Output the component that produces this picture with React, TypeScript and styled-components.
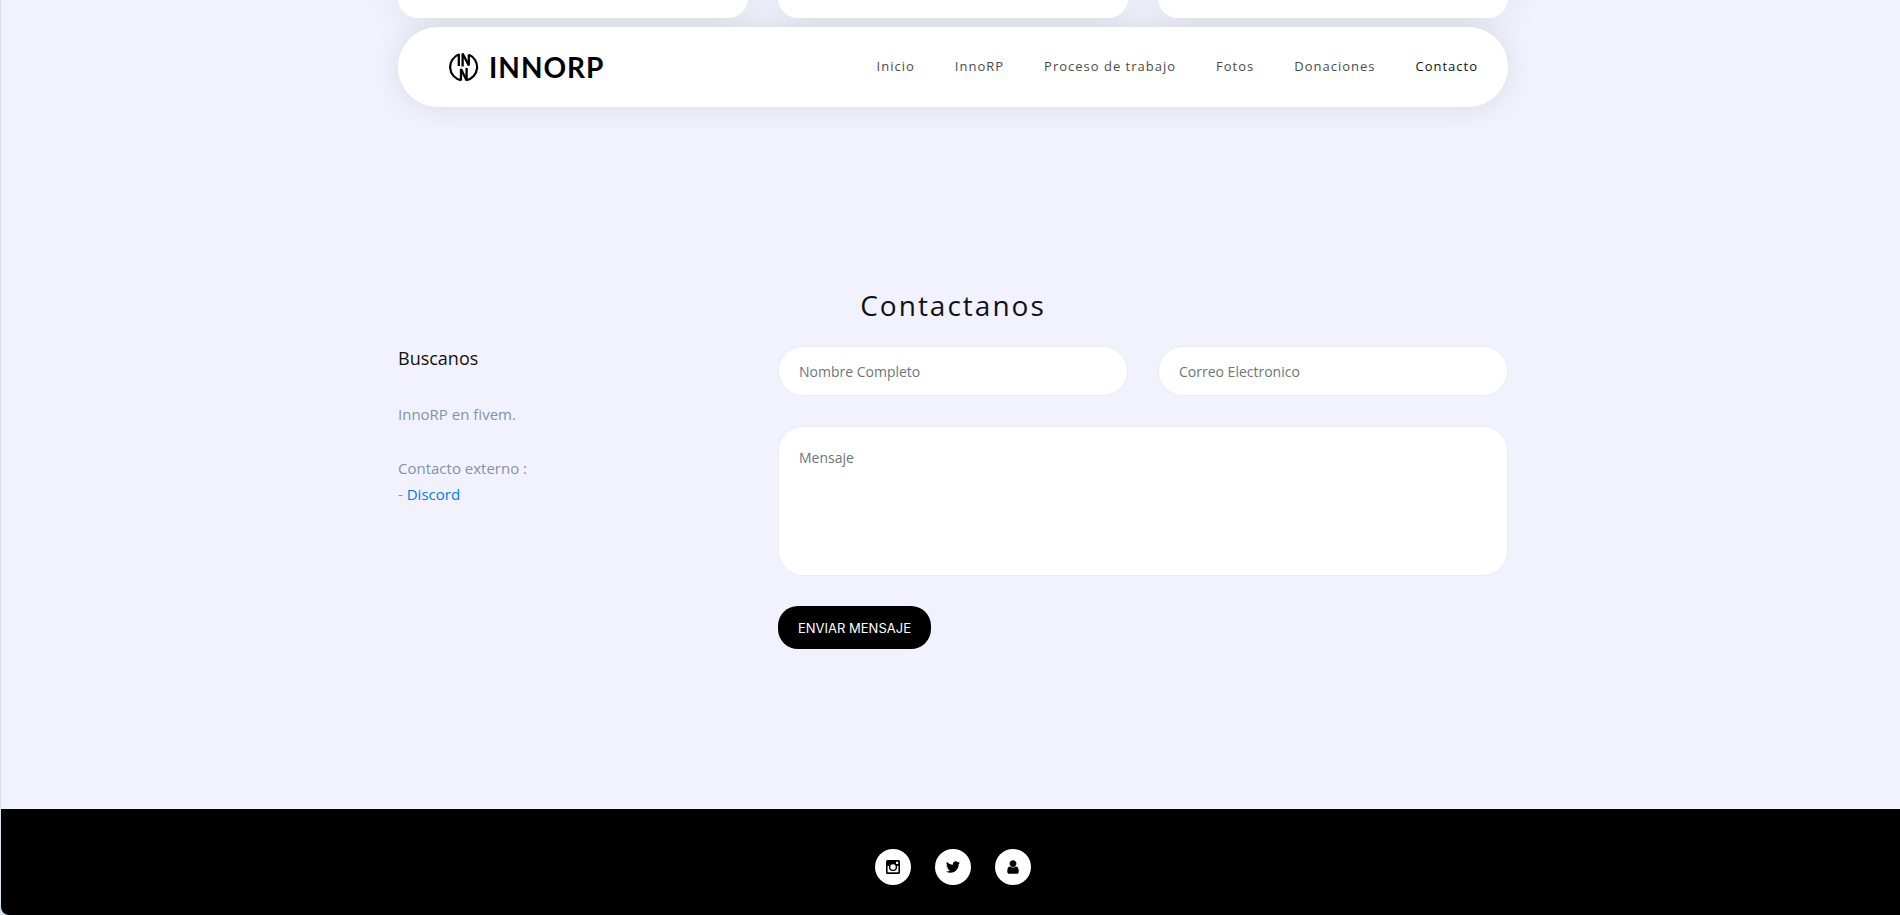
import React from "react";
import styled, { createGlobalStyle } from "styled-components";

const GlobalStyle = createGlobalStyle`
  * { box-sizing: border-box; }
  body {
    margin: 0;
    background: #d5e2ed;
    color: #111;
    font-family: "Open Sans", "Noto Sans", sans-serif;
    font-size: 15px;
    line-height: 26px;
  }
`;

const Frame = styled.div`
  padding-left: 1px;
`;

const Page = styled.div`
  display: flex;
  flex-direction: column;
  min-height: 100vh;
  overflow: hidden;
  border-bottom-left-radius: 8px;
  background: #f2f2fe;
`;

const Container = styled.div`
  width: 100%;
  max-width: 1145px;
  margin: 0 auto;
  padding: 0 15px 0 20px;
`;

const TopContainer = styled(Container)`
  isolation: isolate;
`;

const CardRow = styled.div`
  display: grid;
  grid-template-columns: repeat(3, 1fr);
  gap: 30px;
  margin-top: -100px;
`;

const Card = styled.article`
  height: 118px;
  border-radius: 20px;
  background: #fff;
  box-shadow: 0 0 40px rgba(20, 20, 50, 0.08);
`;

const NavBar = styled.header`
  position: relative;
  display: flex;
  align-items: center;
  justify-content: space-between;
  min-height: 80px;
  margin-top: 9px;
  padding: 0 10px 0 51px;
  border-radius: 40px;
  background: #fff;

  /* The shadow sits behind the cards, so their lower edges stay white. */
  &::before {
    content: "";
    position: absolute;
    inset: 0;
    z-index: -1;
    border-radius: 40px;
    box-shadow: 0 0 30px rgba(0, 0, 0, 0.1);
  }
`;

const NavSurface = styled.div`
  position: relative;
`;

const Brand = styled.a`
  display: flex;
  align-items: center;
  gap: 10px;
  color: #000;
  font-family: Lato, sans-serif;
  font-size: 28px;
  font-weight: 700;
  line-height: 32px;
  letter-spacing: 1px;
  text-decoration: none;
`;

const Menu = styled.nav`
  display: flex;
`;

const MenuLink = styled.a<{ $active?: boolean }>`
  padding: 9px 20px 11px;
  color: ${(p) => (p.$active ? "#111" : "#4a4a4a")};
  font-size: 13px;
  line-height: 20px;
  letter-spacing: 1px;
  text-decoration: none;
`;

const Contact = styled.section`
  padding: 181px 0 160px;
`;

const Title = styled.h2`
  margin: 0 0 24px;
  font-size: 28px;
  font-weight: 400;
  line-height: 34px;
  letter-spacing: 2px;
  text-align: center;
`;

const Columns = styled.div`
  display: grid;
  grid-template-columns: repeat(3, 1fr);
  column-gap: 30px;
`;

const Info = styled.div`
  color: #8492a6;
`;

const InfoTitle = styled.h3`
  margin: 0 0 31px;
  color: #111;
  font-size: 18px;
  font-weight: 400;
  line-height: 24px;
`;

const InfoText = styled.p`
  margin: 0 0 28px;
`;

const TextLink = styled.a`
  color: #007bff;
  text-decoration: none;
`;

const Form = styled.form`
  display: grid;
  grid-column: span 2;
  grid-template-columns: 1fr 1fr;
  gap: 30px;
`;

const Field = styled.input`
  width: 100%;
  height: 50px;
  padding: 0 20px;
  border: 1px solid #ececf0;
  border-radius: 25px;
  background: #fff;
  font: inherit;
  font-size: 14px;
  line-height: 21px;
  outline: none;

  &::placeholder {
    color: #6c757d;
    opacity: 1;
  }
`;

const MessageField = styled(Field)`
  display: block;
  grid-column: 1 / -1;
  height: 150px;
  padding: 20px;
  resize: none;
`;

const SubmitButton = styled.button`
  justify-self: start;
  height: 43px;
  padding: 0 20px;
  border: 0;
  border-radius: 20px;
  background: #000;
  color: #fff;
  font-family: Inter, sans-serif;
  font-size: 13px;
  line-height: 20px;
  cursor: pointer;
`;

const Footer = styled.footer`
  flex: 1;
  padding: 40px 0 30px;
  background: #000;
`;

const SocialList = styled.div`
  display: flex;
  justify-content: center;
  gap: 24px;
`;

const SocialLink = styled.a`
  display: flex;
  align-items: center;
  justify-content: center;
  width: 36px;
  height: 36px;
  border-radius: 50%;
  background: #fff;
  color: #000;
`;

const Emblem = () => (
  <svg width="30" height="30" viewBox="0 0 30 30" fill="none" stroke="currentColor" aria-hidden="true">
    <path d="M10.4 2.3A13.4 13.4 0 0 0 12 28.2M20 2.8A13.4 13.4 0 0 1 17.5 28.2" strokeWidth="2.2" />
    <path d="M9.8 2V14M13.6 14.5V1.5L19.8 13.5V2.5M12 28.5V17L17.6 28.5V16" strokeWidth="2.3" />
  </svg>
);

const CameraIcon = () => (
  <svg width="14" height="14" viewBox="0 0 14 14" aria-hidden="true">
    <rect width="14" height="14" rx="1.6" fill="currentColor" />
    <path d="M1.6 6H12.4V12.3H1.6Z" fill="#fff" />
    <circle cx="7" cy="7" r="4.1" fill="currentColor" />
    <circle cx="7" cy="7" r="2.7" fill="#fff" />
    <rect x="10" y="1.7" width="2.3" height="2.3" rx="0.4" fill="#fff" />
  </svg>
);

const BirdIcon = () => (
  <svg width="16" height="16" viewBox="0 0 1792 1792" fill="currentColor" aria-hidden="true">
    <path d="M1684 408q-67 98-162 167 1 14 1 42 0 130-38 259.5t-115.5 248.5-184.5 210.5-258 146-323 54.5q-271 0-496-145 35 4 78 4 225 0 401-138-105-2-188-64.5t-114-159.5q33 5 61 5 43 0 85-11-112-23-185.5-111.5t-73.5-205.5v-4q68 38 146 41-66-44-105-115t-39-154q0-88 44-163 121 149 294.5 238.5t371.5 99.5q-8-38-8-74 0-134 94.5-228.5t228.5-94.5q140 0 236 102 109-21 205-78-37 115-142 178 93-10 186-50z" />
  </svg>
);

const UserIcon = () => (
  <svg width="16" height="16" viewBox="-256 0 1792 1792" fill="currentColor" aria-hidden="true">
    <path d="M1280 1399q0 109-62.5 187t-150.5 78h-854q-88 0-150.5-78t-62.5-187q0-85 8.5-160.5t31.5-152 58.5-131 94-89 134.5-34.5q131 128 313 128t313-128q76 0 134.5 34.5t94 89 58.5 131 31.5 152 8.5 160.5zm-256-887q0 159-112.5 271.5t-271.5 112.5-271.5-112.5-112.5-271.5 112.5-271.5 271.5-112.5 271.5 112.5 112.5 271.5z" />
  </svg>
);

const menu = ["Inicio", "InnoRP", "Proceso de trabajo", "Fotos", "Donaciones", "Contacto"];

export default function App() {
  return (
    <Frame>
      <GlobalStyle />
      <Page>
        <TopContainer>
          <CardRow>
            <Card />
            <Card />
            <Card />
          </CardRow>
          <NavSurface>
            <NavBar>
              <Brand href="#inicio">
                <Emblem />
                INNORP
              </Brand>
              <Menu>
                {menu.map((label) => (
                  <MenuLink key={label} href="#" $active={label === "Contacto"}>
                    {label}
                  </MenuLink>
                ))}
              </Menu>
            </NavBar>
          </NavSurface>
        </TopContainer>
        <Container>
          <Contact>
            <Title>Contactanos</Title>
            <Columns>
              <Info>
                <InfoTitle>Buscanos</InfoTitle>
                <InfoText>InnoRP en fivem.</InfoText>
                <InfoText>
                  Contacto externo :<br />- <TextLink href="#discord">Discord</TextLink>
                </InfoText>
              </Info>
              <Form>
                <Field type="text" placeholder="Nombre Completo" aria-label="Nombre Completo" />
                <Field type="email" placeholder="Correo Electronico" aria-label="Correo Electronico" />
                <MessageField as="textarea" placeholder="Mensaje" aria-label="Mensaje" />
                <SubmitButton type="button">ENVIAR MENSAJE</SubmitButton>
              </Form>
            </Columns>
          </Contact>
        </Container>
        <Footer>
          <Container>
            <SocialList>
              <SocialLink href="#instagram" aria-label="Instagram">
                <CameraIcon />
              </SocialLink>
              <SocialLink href="#twitter" aria-label="Twitter">
                <BirdIcon />
              </SocialLink>
              <SocialLink href="#perfil" aria-label="Perfil">
                <UserIcon />
              </SocialLink>
            </SocialList>
          </Container>
        </Footer>
      </Page>
    </Frame>
  );
}
